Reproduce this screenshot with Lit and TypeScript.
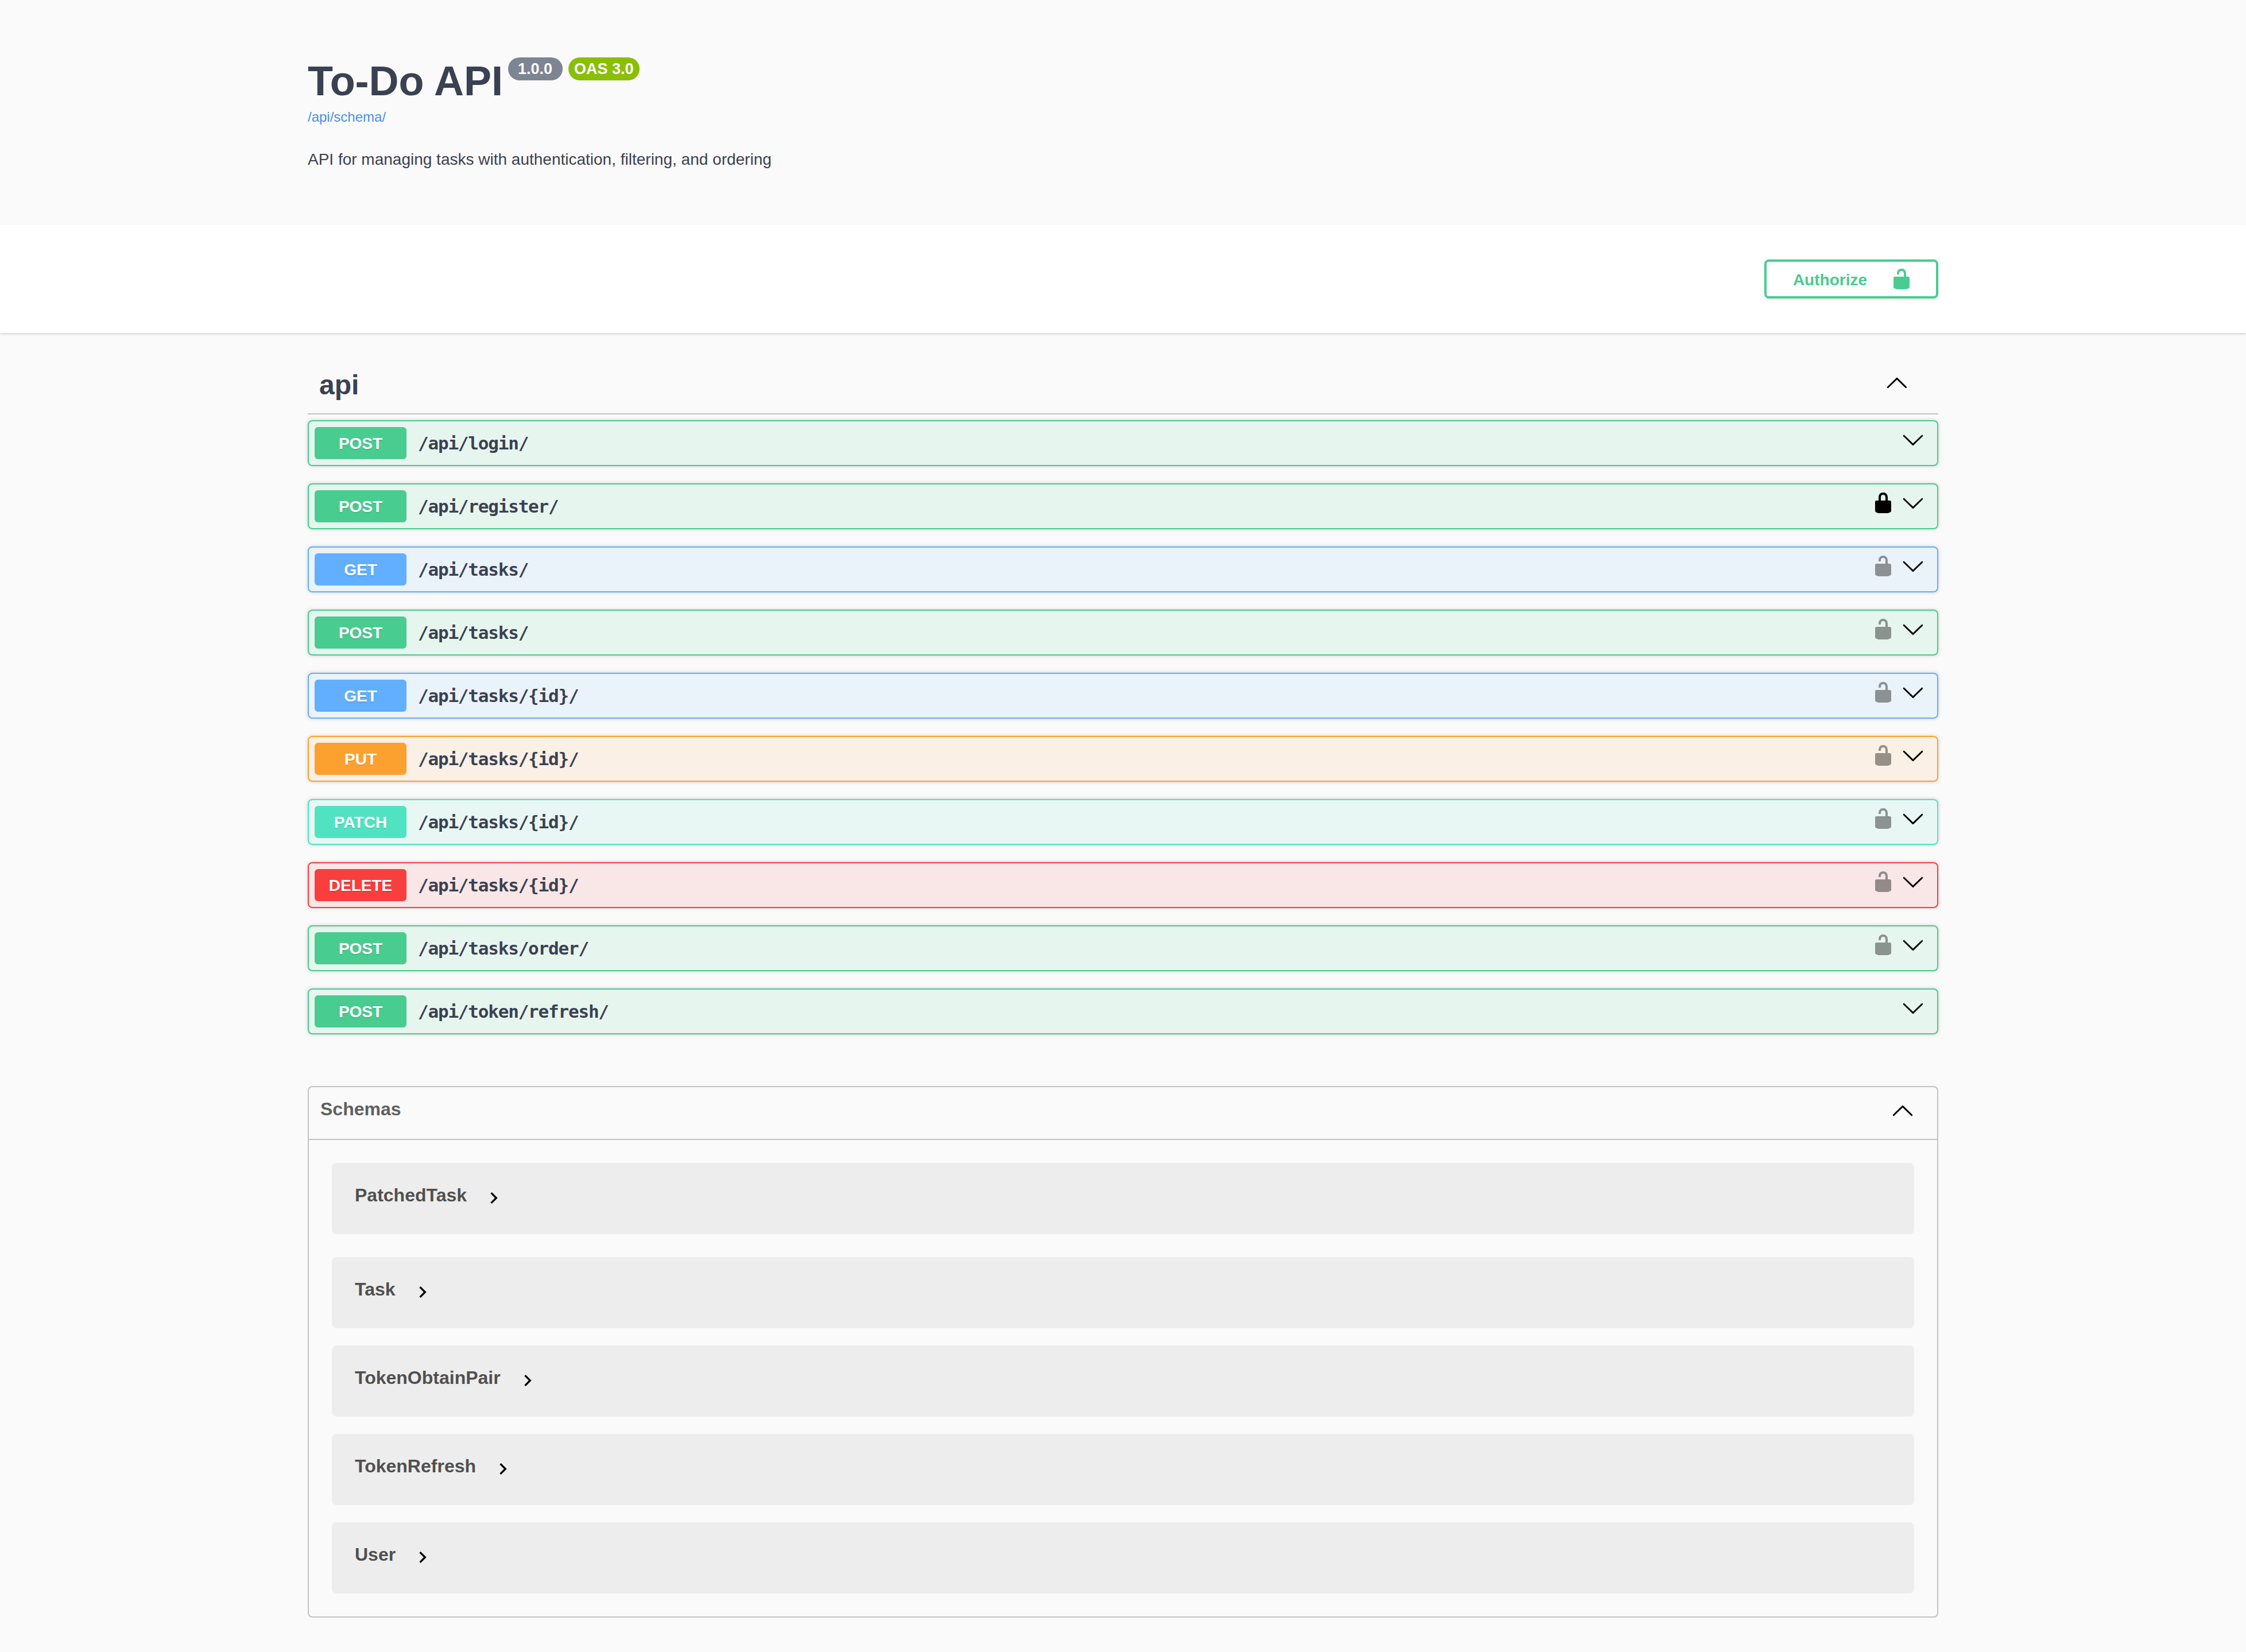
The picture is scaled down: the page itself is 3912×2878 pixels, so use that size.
import { LitElement, html, css, svg } from "lit";
import { customElement } from "lit/decorators.js";

const arrowDown = svg`<path d="M17.418 6.109c.272-.268.709-.268.979 0s.271.701 0 .969l-7.908 7.83c-.27.268-.707.268-.979 0l-7.908-7.83c-.27-.268-.27-.701 0-.969.271-.268.709-.268.979 0L10 13.25l7.418-7.141z"/>`;
const arrowUp = svg`<path transform="rotate(180 10 10)" d="M17.418 6.109c.272-.268.709-.268.979 0s.271.701 0 .969l-7.908 7.83c-.27.268-.707.268-.979 0l-7.908-7.83c-.27-.268-.27-.701 0-.969.271-.268.709-.268.979 0L10 13.25l7.418-7.141z"/>`;
const unlocked = svg`<path d="M15.8 8H14V5.6C14 2.703 12.665 1 10 1 7.334 1 6 2.703 6 5.6V6h2v-.801C8 3.754 8.797 3 10 3c1.203 0 2 .754 2 2.199V8H4c-.553 0-1 .646-1 1.199V17c0 .549.428 1.139.951 1.307l1.197.387C5.672 18.861 6.55 19 7.1 19h5.8c.549 0 1.428-.139 1.951-.307l1.196-.387c.524-.167.953-.757.953-1.306V9.199C17 8.646 16.352 8 15.8 8z"/>`;
const locked = svg`<path d="M15.8 8H14V5.6C14 2.703 12.665 1 10 1 7.334 1 6 2.703 6 5.6V8H4c-.553 0-1 .646-1 1.199V17c0 .549.428 1.139.951 1.307l1.197.387C5.672 18.861 6.55 19 7.1 19h5.8c.549 0 1.428-.139 1.951-.307l1.196-.387c.524-.167.953-.757.953-1.306V9.199C17 8.646 16.352 8 15.8 8zM12 8H8V5.199C8 3.754 8.797 3 10 3c1.203 0 2 .754 2 2.199V8z"/>`;

type Lock = "none" | "locked" | "open";

const operations: { method: string; path: string; lock: Lock }[] = [
  { method: "post", path: "/api/login/", lock: "none" },
  { method: "post", path: "/api/register/", lock: "locked" },
  { method: "get", path: "/api/tasks/", lock: "open" },
  { method: "post", path: "/api/tasks/", lock: "open" },
  { method: "get", path: "/api/tasks/{id}/", lock: "open" },
  { method: "put", path: "/api/tasks/{id}/", lock: "open" },
  { method: "patch", path: "/api/tasks/{id}/", lock: "open" },
  { method: "delete", path: "/api/tasks/{id}/", lock: "open" },
  { method: "post", path: "/api/tasks/order/", lock: "open" },
  { method: "post", path: "/api/token/refresh/", lock: "none" },
];

const schemas = ["PatchedTask", "Task", "TokenObtainPair", "TokenRefresh", "User"];

@customElement("app-root")
export class AppRoot extends LitElement {
  static styles = css`
    :host {
      display: block;
      min-height: 100vh;
      background: #fafafa;
      color: #3b4151;
      font-family: "Liberation Sans", Arial, sans-serif;
    }
    .wrap {
      width: 2840px;
      margin: 0 auto;
    }
    svg {
      display: block;
      flex: none;
      width: 40px;
      height: 40px;
    }

    .info {
      height: 292px;
      padding-top: 100px;
      box-sizing: content-box;
    }
    .title-line {
      display: flex;
      align-items: flex-start;
    }
    h1 {
      margin: 0;
      font-size: 72px;
      line-height: 83px;
      font-weight: 700;
    }
    .stamp {
      margin-left: 9px;
      padding: 4px 18px 4px 17px;
      border-radius: 114px;
      background: #7d8492;
      color: #fff;
      font-size: 27px;
      line-height: 32px;
      font-weight: 700;
    }
    .stamp.oas {
      margin-left: 10px;
      padding: 4px 10px;
      background: #89bf04;
    }
    .base-url {
      display: block;
      margin-top: 7px;
      font-size: 24px;
      line-height: 28px;
      color: #4990e2;
    }
    .desc {
      margin: 40px 0 0;
      font-size: 28px;
      line-height: 40px;
    }

    .schemes {
      background: #fff;
      box-shadow: 0 2px 4px rgba(0, 0, 0, 0.15);
      padding: 60px 0;
    }
    .schemes .wrap {
      display: flex;
      justify-content: flex-end;
    }
    .authorize {
      display: flex;
      align-items: center;
      box-sizing: border-box;
      height: 68px;
      padding: 0 40px 0 46px;
      border: 4px solid #49cc90;
      border-radius: 8px;
      background: transparent;
      color: #49cc90;
      font-family: inherit;
      font-size: 28px;
      font-weight: 700;
      box-shadow: 0 2px 4px rgba(0, 0, 0, 0.1);
    }
    .authorize span {
      margin-top: 4px;
    }
    .authorize svg {
      margin-left: 40px;
      fill: #49cc90;
    }

    .tag {
      display: flex;
      align-items: center;
      justify-content: space-between;
      height: 100px;
      margin: 40px 0 10px;
      padding: 0 52px 0 20px;
      border-bottom: 2px solid rgba(59, 65, 81, 0.3);
    }
    .tag span {
      font-size: 48px;
      font-weight: 700;
    }
    .tag svg {
      margin-bottom: 4px;
    }

    .op {
      display: flex;
      align-items: center;
      height: 80px;
      box-sizing: border-box;
      padding: 0 22px 0 10px;
      margin-bottom: 30px;
      border: 2px solid;
      border-radius: 8px;
      box-shadow: 0 0 6px rgba(0, 0, 0, 0.19);
    }
    .method {
      width: 160px;
      height: 56px;
      line-height: 58px;
      border-radius: 6px;
      color: #fff;
      font-size: 28px;
      font-weight: 700;
      text-align: center;
      text-shadow: 0 2px 0 rgba(0, 0, 0, 0.1);
    }
    .path {
      flex: 1;
      padding-left: 20px;
      font-family: "DejaVu Sans Mono", monospace;
      font-size: 31px;
      letter-spacing: -1.2px;
      font-weight: 700;
    }
    .controls {
      display: flex;
      gap: 12px;
      align-self: flex-start;
      margin-top: 12px;
    }
    .lock-open {
      fill: rgba(0, 0, 0, 0.4);
    }
    .post { border-color: #49cc90; background: rgba(73, 204, 144, 0.1); }
    .post .method { background: #49cc90; }
    .get { border-color: #61affe; background: rgba(97, 175, 254, 0.1); }
    .get .method { background: #61affe; }
    .put { border-color: #fca130; background: rgba(252, 161, 48, 0.1); }
    .put .method { background: #fca130; }
    .patch { border-color: #50e3c2; background: rgba(80, 227, 194, 0.1); }
    .patch .method { background: #50e3c2; }
    .delete { border-color: #f93e3e; background: rgba(249, 62, 62, 0.1); }
    .delete .method { background: #f93e3e; }

    .models {
      margin-top: 90px;
      border: 2px solid rgba(59, 65, 81, 0.3);
      border-radius: 8px;
      padding-bottom: 40px;
    }
    .models-head {
      display: flex;
      justify-content: space-between;
      align-items: flex-start;
      height: 90px;
      box-sizing: content-box;
      padding: 0 40px 0 20px;
      border-bottom: 2px solid rgba(59, 65, 81, 0.3);
      margin-bottom: 40px;
    }
    .models-head span {
      margin-top: 20px;
      font-size: 32px;
      line-height: 37px;
      font-weight: 700;
      color: #606060;
    }
    .models-head svg {
      margin-top: 22px;
    }
    .model {
      display: flex;
      align-items: flex-start;
      box-sizing: border-box;
      height: 124px;
      margin: 0 40px 30px;
      padding: 38px 40px 0;
      border-radius: 8px;
      background: rgba(0, 0, 0, 0.05);
      color: #505050;
      font-size: 32px;
      line-height: 37px;
      font-weight: 700;
    }
    .model.first {
      margin-bottom: 40px;
    }
    .model.last {
      margin-bottom: 0;
    }
    .model svg {
      margin: 3px 0 0 27px;
    }
  `;

  private renderOp(op: { method: string; path: string; lock: Lock }) {
    return html`
      <div class="op ${op.method}">
        <span class="method">${op.method.toUpperCase()}</span>
        <span class="path">${op.path}</span>
        <div class="controls">
          ${op.lock === "locked" ? html`<svg viewBox="0 0 20 20">${locked}</svg>` : ""}
          ${op.lock === "open" ? html`<svg class="lock-open" viewBox="0 0 20 20">${unlocked}</svg>` : ""}
          <svg viewBox="0 0 20 20">${arrowDown}</svg>
        </div>
      </div>
    `;
  }

  render() {
    return html`
      <div class="wrap info">
        <div class="title-line">
          <h1>To-Do API</h1>
          <span class="stamp">1.0.0</span>
          <span class="stamp oas">OAS 3.0</span>
        </div>
        <span class="base-url">/api/schema/</span>
        <p class="desc">API for managing tasks with authentication, filtering, and ordering</p>
      </div>

      <div class="schemes">
        <div class="wrap">
          <button class="authorize">
            <span>Authorize</span>
            <svg viewBox="0 0 20 20">${unlocked}</svg>
          </button>
        </div>
      </div>

      <div class="wrap">
        <div class="tag">
          <span>api</span>
          <svg viewBox="0 0 20 20">${arrowUp}</svg>
        </div>
        ${operations.map((op) => this.renderOp(op))}

        <section class="models">
          <div class="models-head">
            <span>Schemas</span>
            <svg viewBox="0 0 20 20">${arrowUp}</svg>
          </div>
          ${schemas.map(
            (name, i) => html`
              <div class="model ${i === 0 ? "first" : ""} ${i === schemas.length - 1 ? "last" : ""}">
                ${name}
                <svg viewBox="0 0 24 24"><path d="M10 6L8.59 7.41 13.17 12l-4.58 4.59L10 18l6-6z" /></svg>
              </div>
            `
          )}
        </section>
      </div>
    `;
  }
}
